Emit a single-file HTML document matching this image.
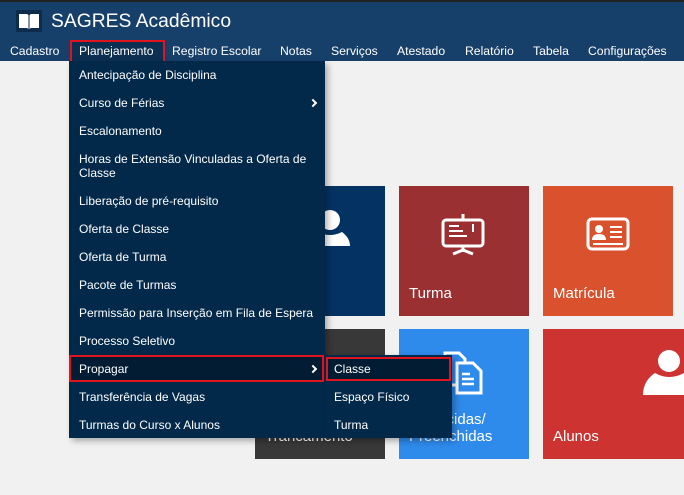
<html><head><style>
*{margin:0;padding:0;box-sizing:border-box}
body{width:684px;height:495px;background:#f1f1f1;font-family:"Liberation Sans",sans-serif;position:relative;overflow:hidden}
.a{position:absolute;white-space:nowrap}
#hd{position:absolute;left:0;top:0;width:684px;height:61px;background:#163f6a;border-top:2px solid #222}
.nv{position:absolute;top:42px;color:#fff;font-size:12.2px}
.t{position:absolute;width:130px;height:130px;color:#fff;font-size:15px}
.t span{position:absolute;left:10px;bottom:14px;line-height:17px}
#m{position:absolute;left:69px;top:61px;width:256px;height:377px;background:#03294a;box-shadow:3px 3px 6px rgba(0,0,0,.3)}
.mi{position:absolute;left:10px;color:#fff;font-size:12px;line-height:14px}
.ch{position:absolute;left:241px;width:6px;height:6px;border-top:2px solid #fff;border-right:2px solid #fff;transform:rotate(45deg)}
#s{position:absolute;left:325px;top:355px;width:127px;height:83px;background:#03294a;box-shadow:3px 3px 6px rgba(0,0,0,.3)}
</style></head><body>
<div id="hd">
<div class="a" style="left:16px;top:8px;width:26px;height:22px;background:#0d2b4b"></div>
<svg class="a" style="left:18px;top:11px" width="22" height="17" viewBox="0 0 22 17"><path d="M1 1h8l1.5 1v14L9 15H1z M21 1h-8l-1.5 1v14l1.5-1h8z" fill="#fff"/></svg>
<div class="a" style="left:51px;top:9px;color:#fff;font-size:19.3px">SAGRES Acadêmico</div>
<div class="nv" style="left:10px">Cadastro</div>
<div class="a" style="left:70px;top:38px;width:95px;height:23px;border:2px solid #e0141e;background:#0c2f52"></div>
<div class="nv" style="left:79px">Planejamento</div>
<div class="nv" style="left:172px">Registro Escolar</div>
<div class="nv" style="left:280px">Notas</div>
<div class="nv" style="left:331px">Serviços</div>
<div class="nv" style="left:397px">Atestado</div>
<div class="nv" style="left:465px">Relatório</div>
<div class="nv" style="left:533px">Tabela</div>
<div class="nv" style="left:588px">Configurações</div>
</div>
<div class="t" style="left:255px;top:186px;background:#043363"><svg class="a" style="left:55px;top:22px" width="40" height="48" viewBox="0 0 40 48"><circle cx="20" cy="12" r="10" fill="#fff"/><path d="M8 24q12 6 24 0 8 6 8 14H0q0-8 8-14z" fill="#fff"/></svg></div>
<div class="t" style="left:399px;top:186px;background:#9a3031"><svg class="a" style="left:42px;top:26px" width="46" height="46" viewBox="0 0 46 46" fill="none" stroke="#fff" stroke-width="3"><rect x="2" y="8" width="40" height="26" rx="3"/><path d="M22 2v6M22 34v6M12 42l10-4 10 4" /><path d="M8 14h10M8 19h14M8 24h18M32 12v8" stroke-width="2"/></svg><span>Turma</span></div>
<div class="t" style="left:543px;top:186px;background:#d9522d"><svg class="a" style="left:43px;top:31px" width="44" height="34" viewBox="0 0 44 34"><rect x="2" y="2" width="40" height="30" rx="4" fill="none" stroke="#fff" stroke-width="3"/><circle cx="13" cy="12" r="4" fill="#fff"/><path d="M6 23q0-6 7-6t7 6z" fill="#fff"/><path d="M24 10h12M24 15h12M24 20h12M7 27h30" stroke="#fff" stroke-width="2"/></svg><span>Matrícula</span></div>
<div class="t" style="left:255px;top:329px;background:#383838"><span>Trancamento</span></div>
<div class="t" style="left:399px;top:329px;background:#2e8aeb"><svg class="a" style="left:42px;top:20px" width="46" height="46" viewBox="0 0 46 46" fill="none" stroke="#fff" stroke-width="3"><path d="M4 4h14l6 6v26H4z"/><path d="M16 14h16l8 8v22H16z" fill="#2e8aeb"/><path d="M21 30h12M21 35h12M21 25h8" stroke-width="2.5"/></svg><span style="bottom:14px">Vagas Oferecidas/<br>Preenchidas</span></div>
<div class="t" style="left:543px;top:329px;background:#cd3330;width:141px"><svg class="a" style="left:100px;top:20px" width="41" height="46" viewBox="0 0 41 46"><circle cx="26" cy="12" r="11" fill="#fff"/><path d="M12 24q14 8 29 0v22H0q0-14 12-22z" fill="#fff"/></svg><span>Alunos</span></div>
<div id="m">
<div class="mi" style="top:7px">Antecipação de Disciplina</div>
<div class="mi" style="top:35px">Curso de Férias</div>
<div class="ch" style="top:39px"></div>
<div class="mi" style="top:63px">Escalonamento</div>
<div class="mi" style="top:91px">Horas de Extensão Vinculadas a Oferta de<br>Classe</div>
<div class="mi" style="top:133px">Liberação de pré-requisito</div>
<div class="mi" style="top:161px">Oferta de Classe</div>
<div class="mi" style="top:189px">Oferta de Turma</div>
<div class="mi" style="top:217px">Pacote de Turmas</div>
<div class="mi" style="top:245px">Permissão para Inserção em Fila de Espera</div>
<div class="mi" style="top:273px">Processo Seletivo</div>
<div class="a" style="left:0;top:294px;width:255px;height:27px;border:2px solid #e0141e;background:#011c33"></div>
<div class="mi" style="top:301px">Propagar</div>
<div class="ch" style="top:305px"></div>
<div class="mi" style="top:329px">Transferência de Vagas</div>
<div class="mi" style="top:357px">Turmas do Curso x Alunos</div>
</div>
<div id="s">
<div class="a" style="left:1px;top:2px;width:125px;height:24px;border:2px solid #e0141e;background:#011c33"></div>
<div class="mi" style="left:9px;top:7px">Classe</div>
<div class="mi" style="left:9px;top:35px">Espaço Físico</div>
<div class="mi" style="left:9px;top:63px">Turma</div>
</div>
</body></html>
